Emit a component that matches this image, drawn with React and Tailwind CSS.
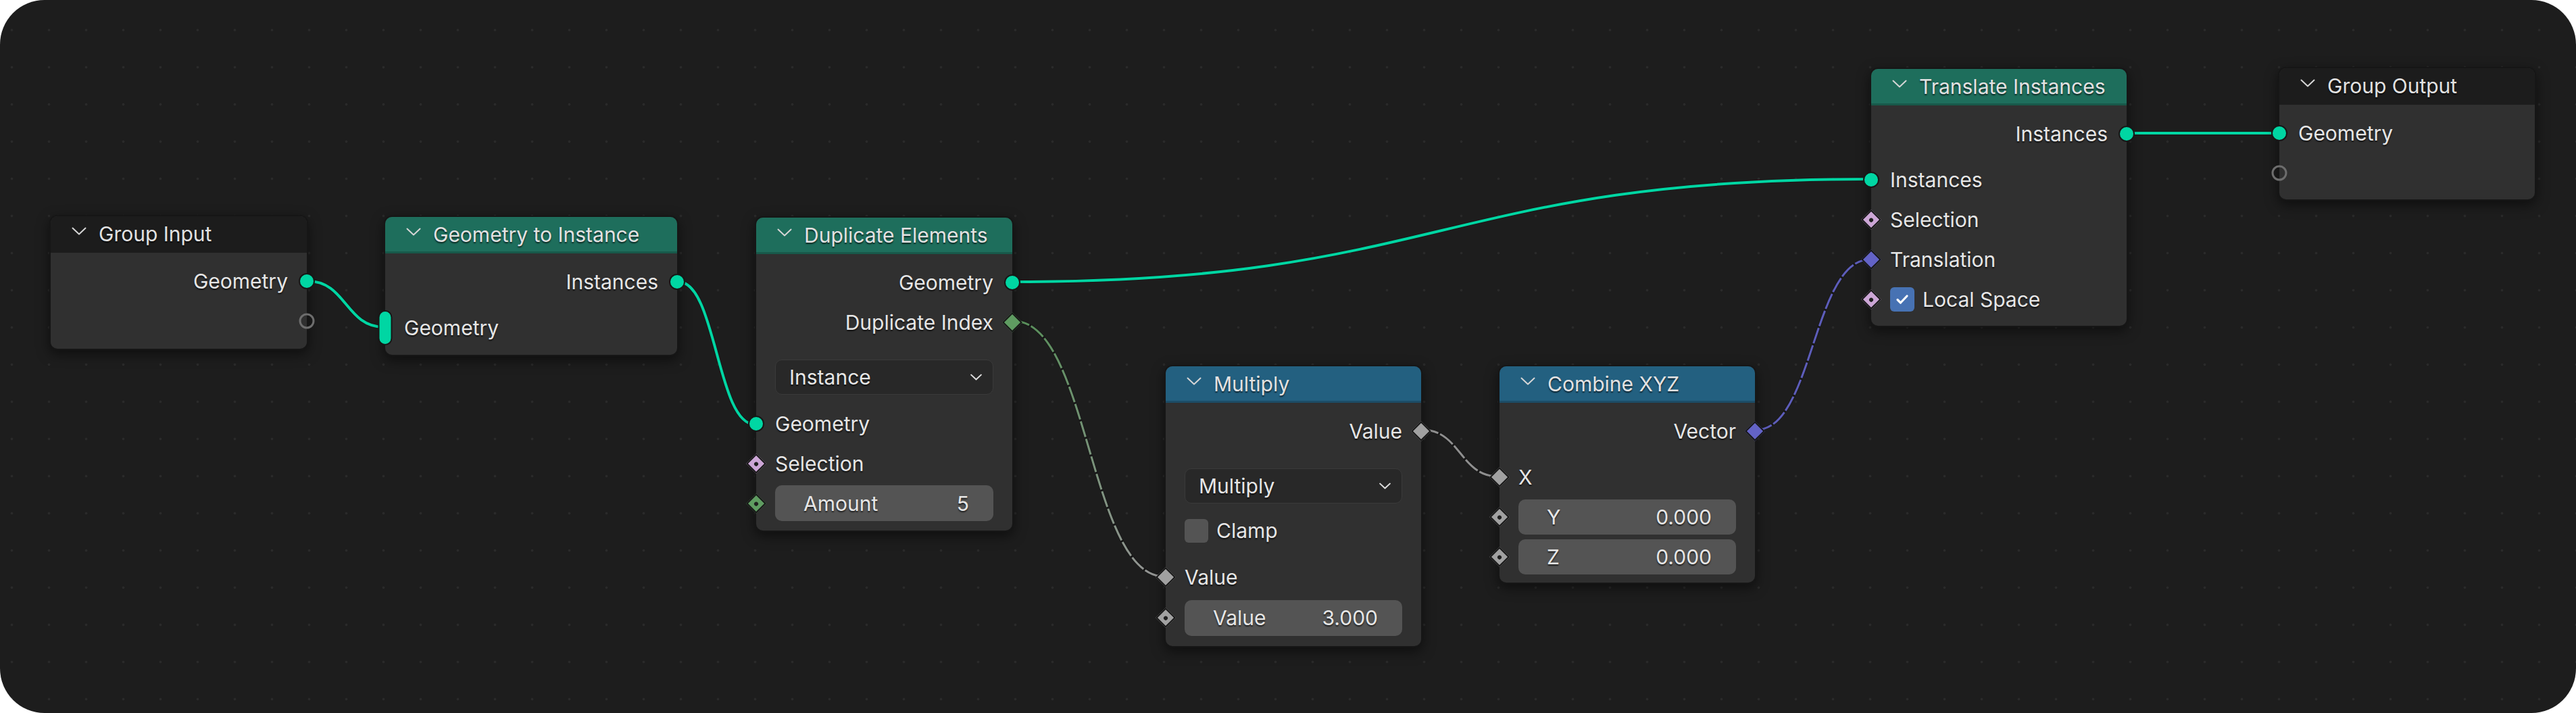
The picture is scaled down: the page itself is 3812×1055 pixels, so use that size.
import React from 'react';

const shadow = '[text-shadow:0_2px_2px_rgba(0,0,0,0.65)]';

const Chevron = ({ className = '', w = '2' }) => (
  <svg viewBox="0 0 22 13" className={className} fill="none" stroke="currentColor" strokeWidth={w} strokeLinecap="round" strokeLinejoin="round">
    <path d="M1.5 1.5l9.5 9 9.5-9" />
  </svg>
);

const Socket = ({ side, kind, color = '', dot = false }) => {
  const pos = side === 'left' ? 'left-0 -translate-x-1/2' : 'right-0 translate-x-1/2';
  if (kind === 'circle') {
    return <span className={`absolute top-1/2 -translate-y-1/2 ${pos} w-[24px] h-[24px] rounded-full border-2 border-[#171717] ${color}`} />;
  }
  if (kind === 'empty') {
    return <span className={`absolute top-1/2 -translate-y-1/2 ${pos} w-[23px] h-[23px] rounded-full border-[3px] border-[#6d6d6d]`} />;
  }
  if (kind === 'pill') {
    return <span className={`absolute top-1/2 -translate-y-1/2 ${pos} w-[21px] h-[52px] rounded-full border-2 border-[#171717] ${color}`} />;
  }
  return (
    <span className={`absolute top-1/2 -translate-y-1/2 ${pos} w-[21px] h-[21px] rotate-45 border-2 border-[#171717] flex items-center justify-center ${color}`}>
      {dot && <span className="w-[6px] h-[6px] rounded-full bg-[#1f1f1f]" />}
    </span>
  );
};

const OutRow = ({ label, children }) => (
  <div className={`relative h-[59px] flex items-center justify-end pr-[28px] ${shadow}`}>
    {label}
    {children}
  </div>
);

const InRow = ({ label, children, className = '' }) => (
  <div className={`relative h-[59px] flex items-center pl-[28px] ${shadow} ${className}`}>
    {label}
    {children}
  </div>
);

const Field = ({ label, value, h = 'h-[53px]' }) => (
  <div className={`flex-1 mr-[28px] ${h} rounded-[10px] bg-[#545454] flex items-center justify-between pl-[42px] pr-[36px] ${shadow}`}>
    <span>{label}</span>
    <span>{value}</span>
  </div>
);

const Dropdown = ({ label }) => (
  <div className={`mx-[28px] h-[52px] rounded-[10px] bg-[#282828] border border-[#3a3a3a] flex items-center justify-between pl-[20px] pr-[16px] ${shadow}`}>
    <span>{label}</span>
    <Chevron className="w-[17px] h-[11px] text-[#e0e0e0]" w="2.6" />
  </div>
);

const Node = ({ className, title, header, children }) => (
  <div className={`absolute rounded-[12px] bg-[#303030] border-2 border-[#161616] shadow-[0_6px_18px_rgba(0,0,0,0.5)] ${className}`}>
    <div className={`h-[54px] flex items-center pl-[31px] gap-[18px] rounded-t-[10px] border-b-[3px] ${header} text-[#e2e2e2] ${shadow}`}>
      <Chevron className="w-[22px] h-[13px] -mt-[6px] text-[#d6d6d6]" />
      <span>{title}</span>
    </div>
    <div className="pt-[12px] pb-[11px]">{children}</div>
  </div>
);

const GREEN = 'bg-[#1e6e5c] border-[#18594a]';
const BLUE = 'bg-[#236080] border-[#1c4d67]';
const DARK = 'bg-[#1c1c1c] border-[#1c1c1c]';

const links = [
  { d: 'M456 416 C512 416 512 484 568 484', stroke: '#00d6a3', w: 4 },
  { d: 'M1004 417 C1060 417 1061 628 1117 628', stroke: '#00d6a3', w: 4 },
  { d: 'M1500 417 C2133 417 2134 265 2767 265', stroke: '#00d6a3', w: 4 },
  { d: 'M3149 197 C3260 197 3260 197 3371 197', stroke: '#00d6a3', w: 4 },
  { d: 'M1500 475 C1611 475 1612 853 1723 853', stroke: 'url(#idx)', w: 3, dash: true },
  { d: 'M2105 636 C2161 636 2161 705 2217 705', stroke: '#9c9c9c', w: 3, dash: true },
  { d: 'M2599 636 C2683 636 2683 384 2767 384', stroke: '#6565cc', w: 3, dash: true },
];

export default function App() {
  return (
    <div className="w-[3812px] h-[1055px] bg-white">
      <div className="relative w-full h-full overflow-hidden rounded-[66px] bg-[#1d1d1d] bg-[radial-gradient(circle,#2a2a2a_1.6px,transparent_2.2px)] bg-[size:55px_55px] bg-[position:-10px_17px] font-['Inter','Noto_Sans',sans-serif] text-[30px] leading-none text-[#e6e6e6]">
        <svg className="absolute inset-0 w-full h-full" viewBox="0 0 3812 1055">
          <defs>
            <linearGradient id="idx" gradientUnits="userSpaceOnUse" x1="1500" y1="475" x2="1723" y2="853">
              <stop offset="0" stopColor="#5f9c61" />
              <stop offset="1" stopColor="#a3a3a3" />
            </linearGradient>
          </defs>
          {links.map((l, i) => (
            <g key={i}>
              <path d={l.d} fill="none" stroke="#141414" strokeOpacity="0.45" strokeWidth={l.w + 2} />
              <path d={l.d} fill="none" stroke={l.stroke} strokeWidth={l.w} strokeDasharray={l.dash ? '24 3' : undefined} strokeOpacity={l.dash ? 0.9 : 1} />
            </g>
          ))}
        </svg>

        <Node className="left-[73px] top-[318px] w-[383px] h-[200px]" title="Group Input" header={DARK}>
          <OutRow label="Geometry"><Socket side="right" kind="circle" color="bg-[#00d6a3]" /></OutRow>
          <OutRow label=""><Socket side="right" kind="empty" /></OutRow>
        </Node>

        <Node className="left-[568px] top-[319px] w-[436px]" title="Geometry to Instance" header={GREEN}>
          <OutRow label="Instances"><Socket side="right" kind="circle" color="bg-[#00d6a3]" /></OutRow>
          <div className="pt-[9px]">
            <InRow label="Geometry"><Socket side="left" kind="pill" color="bg-[#00d6a3]" /></InRow>
          </div>
        </Node>

        <Node className="left-[1117px] top-[320px] w-[383px]" title="Duplicate Elements" header={GREEN}>
          <OutRow label="Geometry"><Socket side="right" kind="circle" color="bg-[#00d6a3]" /></OutRow>
          <OutRow label="Duplicate Index"><Socket side="right" kind="diamond" color="bg-[#5f9c61]" /></OutRow>
          <div className="pt-[26px] pb-[4px]">
            <Dropdown label="Instance" />
          </div>
          <div className="pt-[9px]">
            <InRow label="Geometry"><Socket side="left" kind="circle" color="bg-[#00d6a3]" /></InRow>
            <InRow label="Selection"><Socket side="left" kind="diamond" color="bg-[#cca6d6]" dot /></InRow>
            <InRow label="">
              <Socket side="left" kind="diamond" color="bg-[#5f9c61]" dot />
              <Field label="Amount" value="5" />
            </InRow>
          </div>
        </Node>

        <Node className="left-[1723px] top-[540px] w-[382px] h-[418px]" title="Multiply" header={BLUE}>
          <OutRow label="Value"><Socket side="right" kind="diamond" color="bg-[#a1a1a1]" /></OutRow>
          <div className="pt-[26px] pb-[4px] flex flex-col gap-[14px]">
            <Dropdown label="Multiply" />
            <div className={`h-[52px] mx-[28px] flex items-center gap-[12px] ${shadow}`}>
              <span className="w-[35px] h-[35px] rounded-[6px] bg-[#545454]" />
              <span>Clamp</span>
            </div>
          </div>
          <div className="pt-[9px]">
            <InRow label="Value"><Socket side="left" kind="diamond" color="bg-[#a1a1a1]" /></InRow>
            <InRow label="" className="h-[62px]">
              <Socket side="left" kind="diamond" color="bg-[#a1a1a1]" dot />
              <Field label="Value" value="3.000" />
            </InRow>
          </div>
        </Node>

        <Node className="left-[2217px] top-[540px] w-[382px] h-[324px]" title="Combine XYZ" header={BLUE}>
          <OutRow label="Vector"><Socket side="right" kind="diamond" color="bg-[#6363c7]" /></OutRow>
          <div className="pt-[9px]">
            <InRow label="X"><Socket side="left" kind="diamond" color="bg-[#a1a1a1]" /></InRow>
            <InRow label="">
              <Socket side="left" kind="diamond" color="bg-[#a1a1a1]" dot />
              <Field label="Y" value="0.000" h="h-[52px]" />
            </InRow>
            <InRow label="">
              <Socket side="left" kind="diamond" color="bg-[#a1a1a1]" dot />
              <Field label="Z" value="0.000" h="h-[52px]" />
            </InRow>
          </div>
        </Node>

        <Node className="left-[2767px] top-[100px] w-[382px] h-[384px]" title="Translate Instances" header={GREEN}>
          <OutRow label="Instances"><Socket side="right" kind="circle" color="bg-[#00d6a3]" /></OutRow>
          <div className="pt-[9px]">
            <InRow label="Instances"><Socket side="left" kind="circle" color="bg-[#00d6a3]" /></InRow>
            <InRow label="Selection"><Socket side="left" kind="diamond" color="bg-[#cca6d6]" dot /></InRow>
            <InRow label="Translation"><Socket side="left" kind="diamond" color="bg-[#6363c7]" /></InRow>
            <InRow label="">
              <Socket side="left" kind="diamond" color="bg-[#cca6d6]" dot />
              <span className="w-[36px] h-[36px] rounded-[6px] bg-[#4772b3] flex items-center justify-center mr-[12px]">
                <svg viewBox="0 0 24 24" className="w-[24px] h-[24px]" fill="none" stroke="#ffffff" strokeWidth="3.2" strokeLinecap="round" strokeLinejoin="round">
                  <path d="M5 12.5l4.5 4.5L19 7" />
                </svg>
              </span>
              <span>Local Space</span>
            </InRow>
          </div>
        </Node>

        <Node className="left-[3371px] top-[99px] w-[382px] h-[198px]" title="Group Output" header={DARK}>
          <InRow label="Geometry"><Socket side="left" kind="circle" color="bg-[#00d6a3]" /></InRow>
          <InRow label=""><Socket side="left" kind="empty" /></InRow>
        </Node>
      </div>
    </div>
  );
}
